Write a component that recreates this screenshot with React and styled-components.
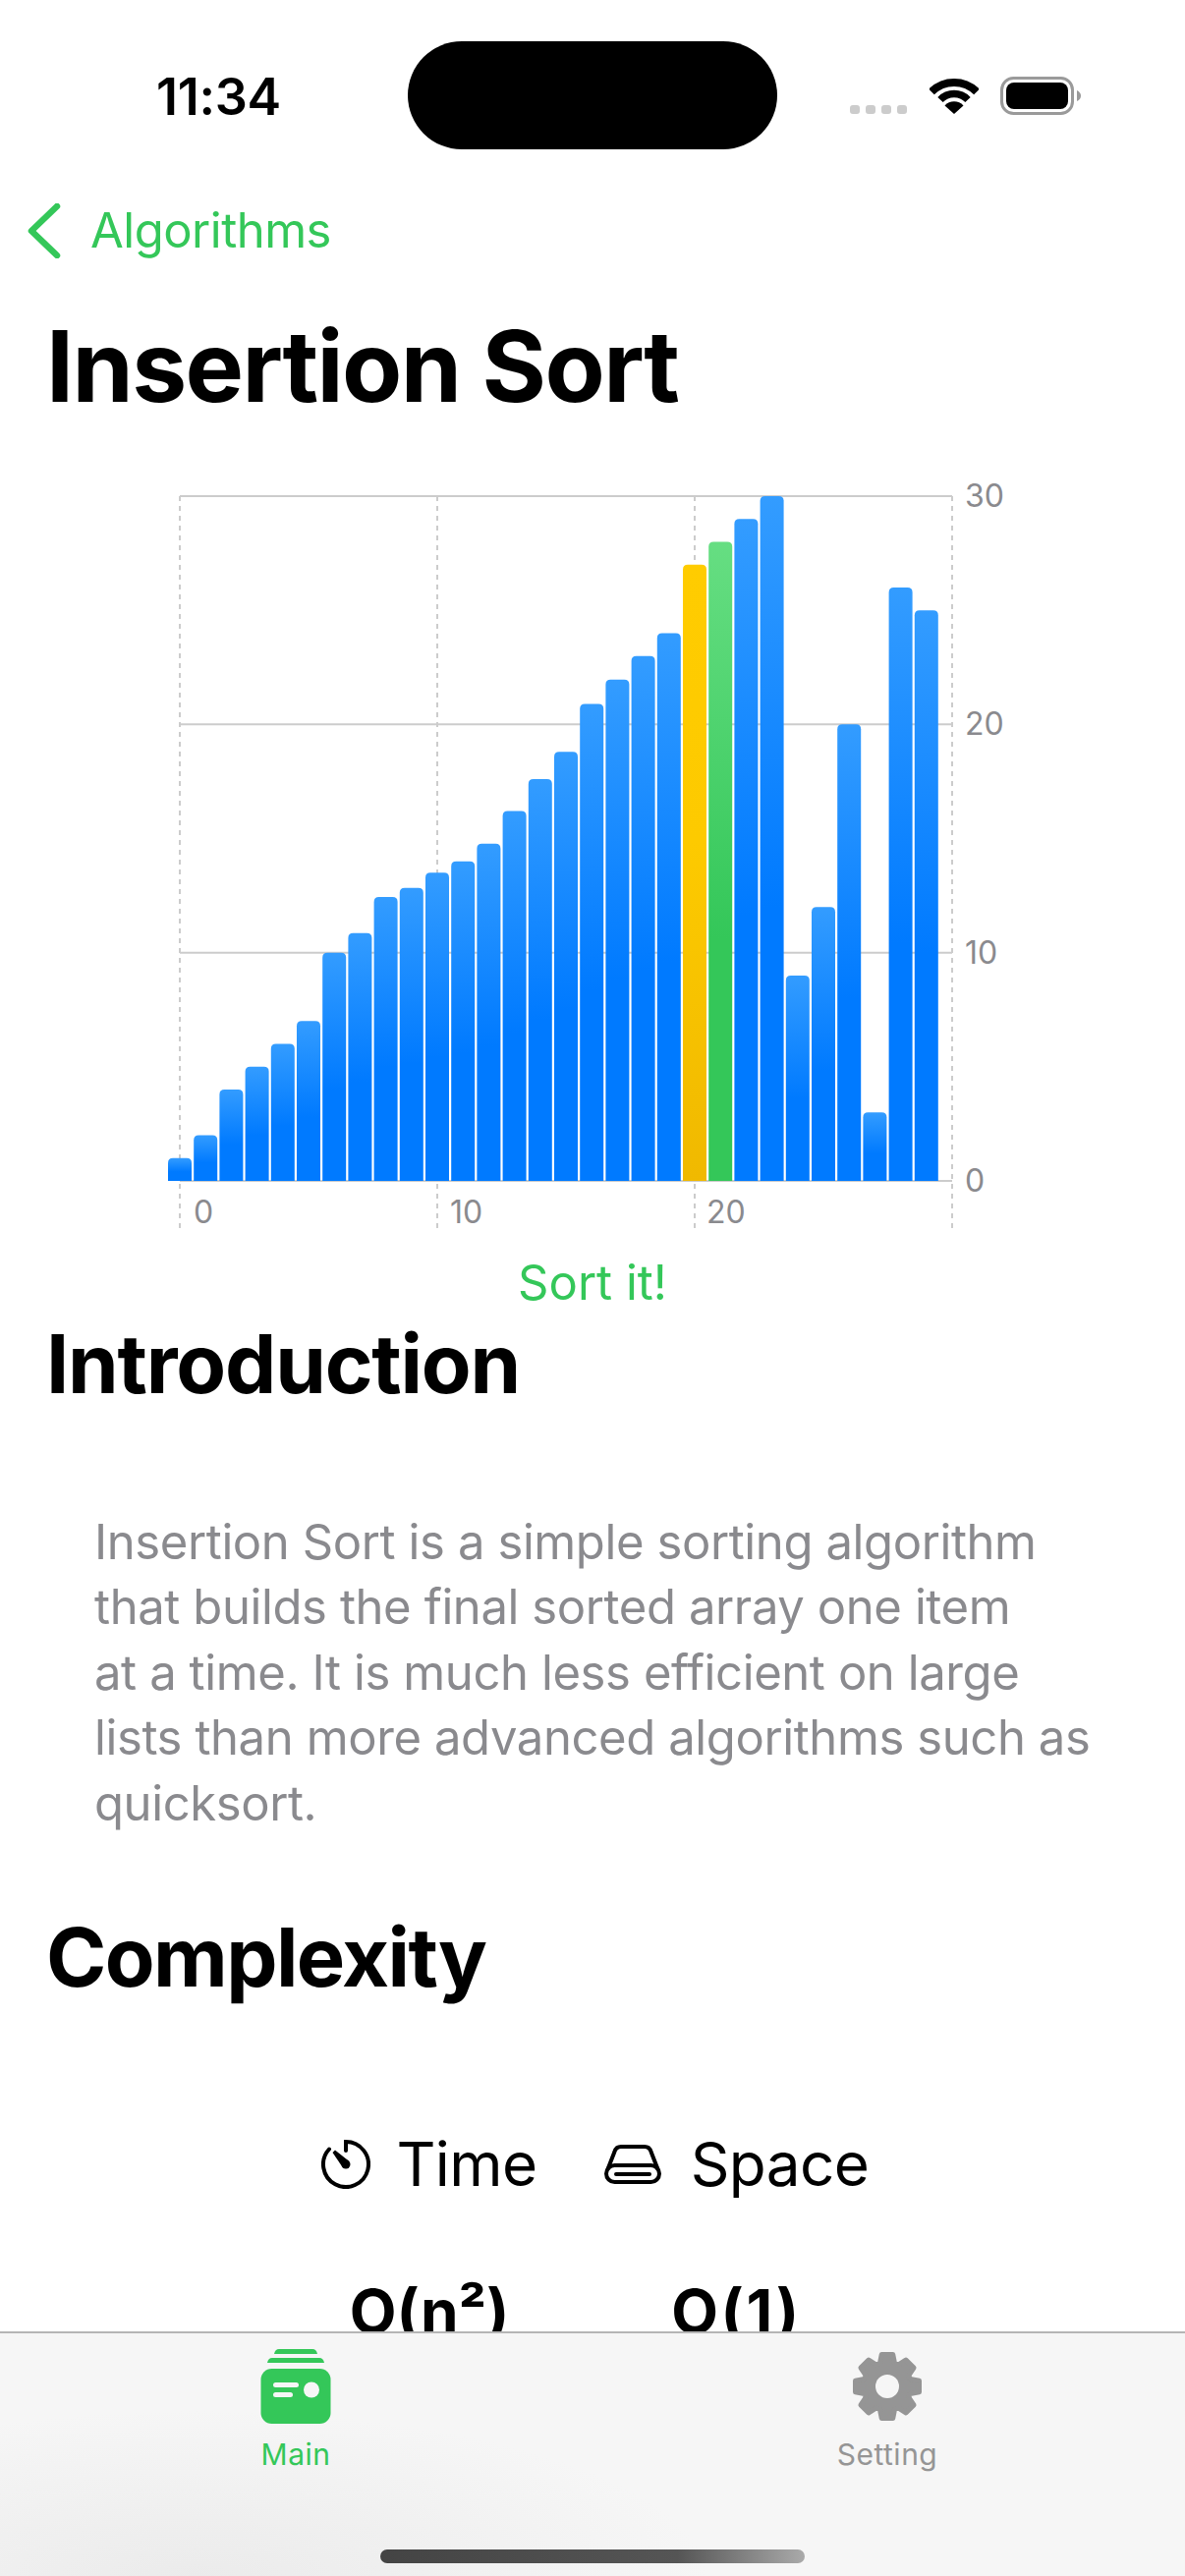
import React from 'react';
import styled, { createGlobalStyle } from 'styled-components';

const GREEN = '#34c759';
const FONT = 'Inter, "Noto Sans", "Liberation Sans", sans-serif';

const GlobalStyle = createGlobalStyle`
  html, body {
    margin: 0;
    padding: 0;
    background: #fff;
  }
  body {
    font-family: ${FONT};
    -webkit-font-smoothing: antialiased;
  }
`;

const Screen = styled.div`
  width: 1206px;
  height: 2622px;
  display: flex;
  flex-direction: column;
  overflow: hidden;
  background: #fff;
  color: #000;
`;

const Scroll = styled.main`
  flex: 1;
  min-height: 0;
  overflow: hidden;
`;

const StatusBar = styled.div`
  display: grid;
  grid-template-columns: 415px 376px 1fr;
  align-items: center;
  padding-top: 42px;
  height: 110px;
`;

const Clock = styled.span`
  padding: 3px 0 0 159px;
  font-size: 52px;
  font-weight: 600;
  letter-spacing: -0.3px;
  line-height: 60px;
`;

const Island = styled.div`
  height: 110px;
  border-radius: 55px;
  background: #000;
`;

const StatusIcons = styled.div`
  align-self: start;
  display: flex;
  align-items: flex-start;
  padding-left: 74px;
  gap: 23px;
`;

const Dots = styled.div`
  display: flex;
  gap: 6px;
  margin-top: 65px;
`;

const Dot = styled.i`
  width: 10px;
  height: 9px;
  border-radius: 3px;
  background: #cccccc;
`;

const BackRow = styled.div`
  display: flex;
  align-items: center;
  gap: 30px;
  padding: 55px 0 0 28px;
  color: ${GREEN};
  font-size: 49px;
  letter-spacing: -0.5px;
  line-height: 56px;
`;

const Title = styled.h1`
  margin: 52px 0 0 47px;
  font-size: 100px;
  font-weight: 700;
  line-height: 116px;
  letter-spacing: -1.6px;
`;

const ChartWrap = styled.div`
  margin-top: 60px;
  height: 770px;
`;

const SortButton = styled.div`
  text-align: center;
  color: ${GREEN};
  font-size: 49px;
  line-height: 60px;
  margin-top: 15px;
`;

const SectionTitle = styled.h2`
  margin: ${(p) => p.$top}px 0 0 47px;
  font-size: 83px;
  font-weight: 700;
  line-height: 96px;
  letter-spacing: ${(p) => p.$tracking}px;
`;

const Paragraph = styled.p`
  margin: 101px 0 0 96px;
  color: #8a8a8e;
  font-size: 49px;
  line-height: 66.4px;
  letter-spacing: -0.4px;
  white-space: nowrap;
`;

const ComplexityGrid = styled.div`
  display: grid;
  grid-template-columns: 218px 269px;
  justify-content: center;
  column-gap: 69px;
  justify-items: center;
  margin-top: 125px;
  padding-left: 6px;
`;

const Metric = styled.div`
  display: flex;
  align-items: center;
  gap: ${(p) => p.$gap}px;
  font-size: 62px;
  line-height: 76px;
  letter-spacing: -0.6px;
`;

const Complexity = styled.div`
  margin-top: 76px;
  font-size: 62px;
  font-weight: 700;
  line-height: 72px;
  white-space: nowrap;
  letter-spacing: ${(p) => p.$tracking || 0}px;
`;

const TabBar = styled.nav`
  flex: none;
  height: 249px;
  box-sizing: border-box;
  border-top: 2px solid #b5b5b5;
  background:
    radial-gradient(ellipse 520px 170px at 200px 249px, #ebebeb, rgba(235, 235, 235, 0)),
    #f6f6f6;
  display: flex;
  flex-direction: column;
`;

const Tabs = styled.div`
  display: grid;
  grid-template-columns: 1fr 1fr;
  padding: 15px 2px 0 0;
`;

const Tab = styled.div`
  display: flex;
  flex-direction: column;
  align-items: center;
  color: ${(p) => (p.$active ? GREEN : '#959595')};
`;

const TabIcon = styled.div`
  height: 78px;
  display: flex;
  align-items: flex-start;
`;

const TabLabel = styled.span`
  font-size: 30px;
  line-height: 36px;
  font-weight: 400;
  letter-spacing: 0.5px;
  margin-top: 12px;
`;

const HomeIndicator = styled.div`
  width: 432px;
  height: 14px;
  border-radius: 7px;
  margin: 79px auto 0;
  background: linear-gradient(90deg, #444 0%, #555 70%, #aaa 100%);
`;

const Wifi = () => (
  <svg width="50" height="37" viewBox="0 0 50 37" style={{ marginTop: 37 }}>
    <path d="M2 14.5 A32.5 32.5 0 0 1 48 14.5" fill="none" stroke="#000" strokeWidth="8" />
    <path d="M11 22.5 A19.5 19.5 0 0 1 39 22.5" fill="none" stroke="#000" strokeWidth="7.5" />
    <path d="M25 37 L15.5 28.5 A13 13 0 0 1 34.5 28.5 Z" fill="#000" />
  </svg>
);

const Battery = () => (
  <svg width="82" height="39" viewBox="0 0 82 39" style={{ marginTop: 36, marginLeft: -1 }}>
    <rect x="1.5" y="1.5" width="72" height="36" rx="12" fill="none" stroke="#9a9a9a" strokeWidth="3" />
    <rect x="6" y="6" width="63" height="27" rx="8" fill="#000" />
    <path d="M78 14 Q82 16 82 19.5 Q82 23 78 25 Z" fill="#9a9a9a" />
  </svg>
);

const Chevron = () => (
  <svg width="34" height="56" viewBox="0 0 34 56">
    <path d="M30 3 L4 28 L30 53" fill="none" stroke={GREEN} strokeWidth="6.5" strokeLinecap="round" strokeLinejoin="round" />
  </svg>
);

const TimerIcon = () => (
  <svg width="50" height="50" viewBox="0 0 50 50">
    <path d="M25 11 V2 A23 23 0 1 1 8 9.5" fill="none" stroke="#000" strokeWidth="4" strokeLinecap="round" />
    <path d="M11.5 13 L14 10.5 L28.5 22 L22 28.5 Z" fill="#000" />
    <circle cx="25" cy="25" r="4.5" fill="#000" />
  </svg>
);

const DriveIcon = () => (
  <svg width="58" height="40" viewBox="0 0 58 40">
    <rect x="2" y="21" width="54" height="17" rx="8.5" fill="none" stroke="#000" strokeWidth="4" />
    <path d="M3.5 25 L10.5 7 Q12 2 17 2 H41 Q46 2 47.5 7 L54.5 25" fill="none" stroke="#000" strokeWidth="4" />
    <path d="M12 30 H46" stroke="#000" strokeWidth="4" strokeLinecap="round" />
  </svg>
);

const WalletIcon = () => (
  <svg width="72" height="78" viewBox="0 0 72 78">
    <path d="M14 6 Q15 1 19 1 H53 Q57 1 58 6 Z" fill={GREEN} />
    <path d="M7 15 Q8 10 12 10 H60 Q64 10 65 15 Z" fill={GREEN} />
    <rect x="0.5" y="21" width="71" height="56" rx="11" fill={GREEN} />
    <rect x="13" y="35" width="26" height="5" rx="2.5" fill="#f6f6f6" />
    <rect x="13" y="45" width="20" height="5" rx="2.5" fill="#f6f6f6" />
    <circle cx="52" cy="42.5" r="8" fill="#f6f6f6" />
  </svg>
);

// eight teeth, corners rounded off by the stroke
const gearPoints = () => {
  const pts = [];
  const at = (deg, r) => {
    const a = ((deg - 90) * Math.PI) / 180;
    return `${(36 + r * Math.cos(a)).toFixed(2)},${(36 + r * Math.sin(a)).toFixed(2)}`;
  };
  for (let i = 0; i < 8; i++) {
    const c = i * 45;
    pts.push(at(c - 18, 24.5), at(c - 10, 33), at(c + 10, 33), at(c + 18, 24.5));
  }
  return pts.join(' ');
};

const GearIcon = () => (
  <svg width="72" height="72" viewBox="0 0 72 72" style={{ marginTop: 3 }}>
    <polygon points={gearPoints()} fill="#959595" stroke="#959595" strokeWidth="5" strokeLinejoin="round" />
    <circle cx="36" cy="36" r="12" fill="#f6f6f6" />
  </svg>
);

const values = [
  1, 2, 4, 5, 6, 7, 10, 10.86, 12.44, 12.84, 13.5, 14, 14.77, 16.2, 17.6, 18.8, 20.9, 21.96, 23, 24,
  27, 28, 29, 30, 9, 12, 20, 3, 26, 25,
];

const PLOT = { left: 183, right: 969, top: 14, bottom: 711 };
const UNIT = (PLOT.bottom - PLOT.top) / 30;
const STEP = 26.2;

const barPath = (x, y, w, bottom) =>
  `M${x} ${bottom} V${y + 5} Q${x} ${y} ${x + 5} ${y} H${x + w - 5} Q${x + w} ${y} ${x + w} ${y + 5} V${bottom} Z`;

const fillFor = (i) => {
  if (i === 20) return 'url(#barYellow)';
  if (i === 21) return 'url(#barGreen)';
  return 'url(#barBlue)';
};

const Chart = () => (
  <svg width="1206" height="770" viewBox="0 0 1206 770">
    <defs>
      <linearGradient id="barBlue" x1="0" y1="0" x2="0" y2="1">
        <stop offset="0" stopColor="#339cff" />
        <stop offset="0.6" stopColor="#007aff" />
      </linearGradient>
      <linearGradient id="barYellow" x1="0" y1="0" x2="0" y2="1">
        <stop offset="0" stopColor="#ffcc00" />
        <stop offset="0.45" stopColor="#fdca00" />
        <stop offset="1" stopColor="#f0b900" />
      </linearGradient>
      <linearGradient id="barGreen" x1="0" y1="0" x2="0" y2="1">
        <stop offset="0" stopColor="#66de82" />
        <stop offset="0.62" stopColor="#34c759" />
      </linearGradient>
    </defs>
    {[0, 10, 20, 30].map((v) => {
      const y = PLOT.bottom - v * UNIT;
      return (
        <g key={v}>
          <line x1={PLOT.left} x2={PLOT.right} y1={y} y2={y} stroke="#cccccc" strokeWidth="2" />
          <text x="982" y={y + 11} fontSize="32" fill="#8a8a8e" fontFamily={FONT}>{v}</text>
        </g>
      );
    })}
    {[183, 445, 707, 969].map((x) => (
      <line key={x} x1={x} x2={x} y1={PLOT.top} y2="763" stroke="#cccccc" strokeWidth="2" strokeDasharray="5 5" />
    ))}
    {values.map((v, i) => {
      const center = 183 + STEP * i;
      return (
        <path key={i} d={barPath(center - 12, PLOT.bottom - v * UNIT, 24, PLOT.bottom)} fill={fillFor(i)} />
      );
    })}
    {[[197, '0'], [458, '10'], [719, '20']].map(([x, t]) => (
      <text key={t} x={x} y="754" fontSize="32" fill="#8a8a8e" fontFamily={FONT}>{t}</text>
    ))}
  </svg>
);

export default function App() {
  return (
    <Screen>
      <GlobalStyle />
      <Scroll>
        <StatusBar>
          <Clock>11:34</Clock>
          <Island />
          <StatusIcons>
            <Dots>
              <Dot /><Dot /><Dot /><Dot />
            </Dots>
            <Wifi />
            <Battery />
          </StatusIcons>
        </StatusBar>
        <BackRow>
          <Chevron />
          <span>Algorithms</span>
        </BackRow>
        <Title>Insertion Sort</Title>
        <ChartWrap>
          <Chart />
        </ChartWrap>
        <SortButton>Sort it!</SortButton>
        <SectionTitle $top={4} $tracking={-1.2}>Introduction</SectionTitle>
        <Paragraph>
          Insertion Sort is a simple sorting algorithm<br />
          that builds the final sorted array one item<br />
          at a time. It is much less efficient on large<br />
          lists than more advanced algorithms such as<br />
          quicksort.
        </Paragraph>
        <SectionTitle $top={75} $tracking={-1.6}>Complexity</SectionTitle>
        <ComplexityGrid>
          <Metric $gap={26}><TimerIcon />Time</Metric>
          <Metric $gap={30}><DriveIcon />Space</Metric>
          <Complexity>O(n²)</Complexity>
          <Complexity $tracking={2.5}>O(1)</Complexity>
        </ComplexityGrid>
      </Scroll>
      <TabBar>
        <Tabs>
          <Tab $active>
            <TabIcon><WalletIcon /></TabIcon>
            <TabLabel>Main</TabLabel>
          </Tab>
          <Tab>
            <TabIcon><GearIcon /></TabIcon>
            <TabLabel>Setting</TabLabel>
          </Tab>
        </Tabs>
        <HomeIndicator />
      </TabBar>
    </Screen>
  );
}
